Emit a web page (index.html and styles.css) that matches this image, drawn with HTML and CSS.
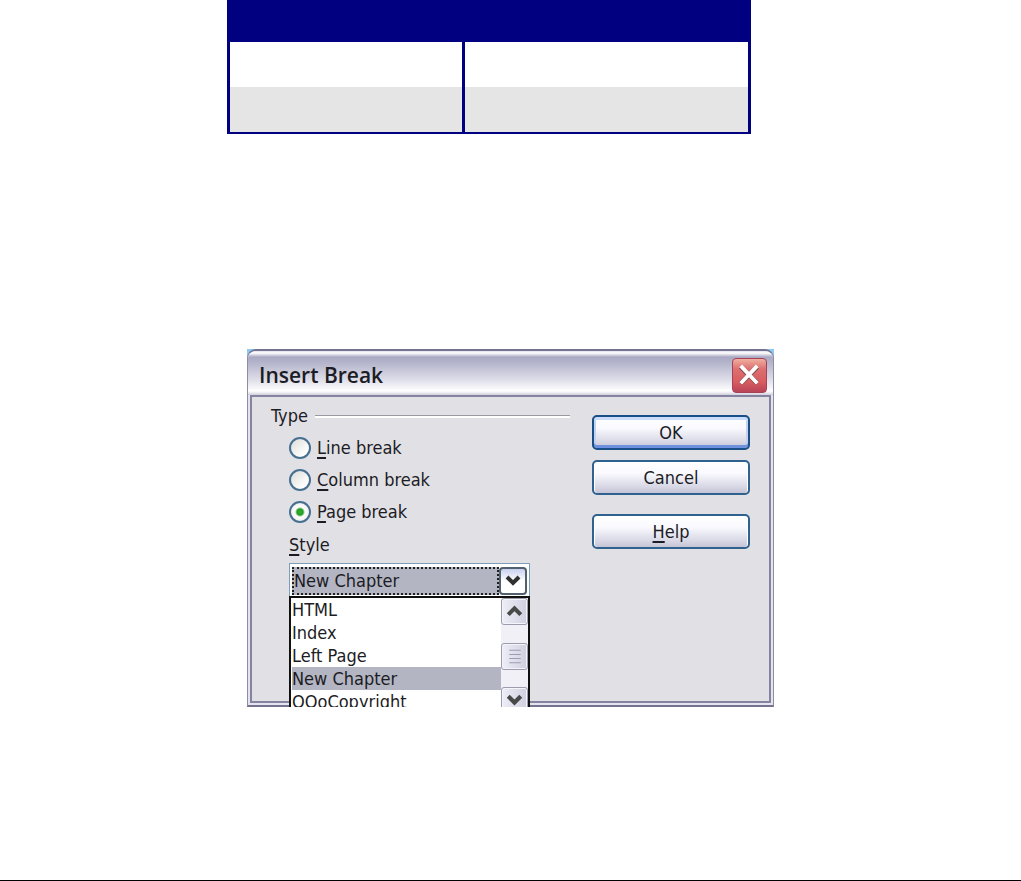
FILE: index.html
```html
<!DOCTYPE html>
<html lang="en">

<head>
    <meta charset="UTF-8">
    <meta name="viewport" content="width=device-width, initial-scale=1.0">
    <title>Insert Break</title>
    <link rel="stylesheet" href="styles.css">
</head>

<body>
<div class="page">
    <table class="grid">
        <thead>
        <tr>
            <th class="first"></th>
            <th></th>
        </tr>
        </thead>
        <tbody>
        <tr>
            <td></td>
            <td></td>
        </tr>
        <tr class="even">
            <td></td>
            <td></td>
        </tr>
        </tbody>
    </table>

    <div class="figure">
        <form class="dialog">
            <div class="titlebar">
                <h1>Insert Break</h1>
                <button type="button" class="close" aria-label="Close">
                    <svg viewBox="0 0 34 34">
                        <path d="M8 8L25 25M25 8L8 25" stroke="#7c4545" stroke-width="5"/>
                        <path d="M8 7L25 25M25 7L8 25" stroke="#fff" stroke-width="4"/>
                    </svg>
                </button>
            </div>
            <div class="content">
                <div class="options">
                    <fieldset>
                        <legend>Type</legend>
                        <label><input type="radio" name="type"><span><u>L</u>ine break</span></label>
                        <label><input type="radio" name="type"><span><u>C</u>olumn break</span></label>
                        <label><input type="radio" name="type" checked><span><u>P</u>age break</span></label>
                    </fieldset>
                    <div class="style">
                        <label class="style-label" for="style"><u>S</u>tyle</label>
                        <div class="combo">
                            <select id="style">
                                <option>HTML</option>
                                <option>Index</option>
                                <option>Left Page</option>
                                <option selected>New Chapter</option>
                                <option>OOoCopyright</option>
                            </select>
                            <span class="arrow">
                                <svg viewBox="0 0 24 24"><path d="M6 8l6 6 6-6" stroke="#303030" stroke-width="4"/></svg>
                            </span>
                            <div class="list">
                                <ul>
                                    <li>HTML</li>
                                    <li>Index</li>
                                    <li>Left Page</li>
                                    <li class="selected">New Chapter</li>
                                    <li>OOoCopyright</li>
                                </ul>
                                <div class="scrollbar">
                                    <button type="button" aria-label="Scroll up">
                                        <svg viewBox="0 0 24 24"><path d="M6 15l6-6 6 6" stroke="#484848" stroke-width="4"/></svg>
                                    </button>
                                    <div class="thumb">
                                        <svg viewBox="0 0 24 24"><path d="M7 6h11M7 10h11M7 14h11M7 18h11" stroke="#9c9cb4"/></svg>
                                    </div>
                                    <button type="button" aria-label="Scroll down">
                                        <svg viewBox="0 0 24 24"><path d="M6 8l6 6 6-6" stroke="#484848" stroke-width="4"/></svg>
                                    </button>
                                </div>
                            </div>
                        </div>
                    </div>
                </div>
                <div class="buttons">
                    <button type="button" class="default">OK</button>
                    <button type="button">Cancel</button>
                    <button type="button" class="help"><span><u>H</u>elp</span></button>
                </div>
            </div>
        </form>
    </div>
</div>
</body>

</html>
```
FILE: styles.css
```css
* {
    box-sizing: border-box;
}

body {
    margin: 0;
    background: #fff;
    color: #1c1c24;
    font: 18px/24px "DejaVu Sans Condensed", "DejaVu Sans", sans-serif;
}

.page {
    min-height: 100vh;
    border-bottom: 1px solid #000;
}

/* table */
.grid {
    width: 524px;
    max-width: 100%;
    margin: 0 auto 215px 227px;
    border: 3px solid #000080;
    border-width: 0 3px 2px;
    border-spacing: 0;
    table-layout: fixed;
}

.grid th,
.grid td {
    height: 45px;
    padding: 0;
}

.grid th {
    height: 42px;
    background: #000080;
}

.grid .first {
    width: 235px;
}

.grid td:first-child {
    border-right: 3px solid #000080;
}

.grid .even td {
    background: #e5e5e5;
}

/* dialog */
.figure {
    overflow: hidden;
    max-width: 527px;
    margin: 0 auto;
    background: #8fc8f0;
}

.dialog {
    padding: 0 2px 2px;
    border: 1px solid #8e8ca4;
    border-top: 2px solid #74728e;
    border-bottom: 2px solid #74728e;
    border-radius: 9px 9px 0 0;
    background: #e4e4ee;
}

.titlebar {
    display: flex;
    align-items: center;
    justify-content: space-between;
    height: 44px;
    margin: 0 -2px;
    padding: 4px 6px 0 11px;
    border-radius: 8px 8px 0 0;
    background: linear-gradient(#e0e0ee 0, #fff 2px, #a9a9c4 6px, #b5b5cc 12px, #dcdce8 28px, #fff 40px, #cfcfdc 44px);
}

.titlebar h1 {
    margin: 0;
    font: 600 21px/30px "Open Sans", sans-serif;
}

.close {
    width: 35px;
    height: 35px;
    padding: 0;
    border: 1px solid #a84058;
    border-radius: 4px;
    background: linear-gradient(#f0b0a0, #dc7070 30%, #d85c60 70%, #b84458);
}

svg {
    display: block;
    width: 100%;
    height: 100%;
    fill: none;
}

.content {
    display: flex;
    justify-content: space-between;
    height: 308px;
    padding: 7px 19px 0;
    border: 2px solid #85839f;
    background: #e1e0e5;
}

u {
    text-underline-offset: 3px;
    text-decoration-thickness: 2px;
    text-decoration-skip-ink: none;
}

fieldset {
    width: 299px;
    margin: 0;
    padding: 0 0 0 18px;
    border: 0;
}

legend {
    display: flex;
    align-items: center;
    gap: 7px;
    width: 299px;
    margin: 0 0 4px -18px;
    padding: 0;
}

legend::after {
    content: "";
    flex: 1;
    height: 2px;
    border-top: 1px solid #9a9aa2;
    background: #fff;
}

fieldset label {
    display: flex;
    align-items: center;
    gap: 6px;
    height: 32px;
}

input[type="radio"] {
    appearance: none;
    width: 22px;
    height: 22px;
    margin: 0;
    border: 2px solid #456f90;
    border-radius: 50%;
    background: linear-gradient(135deg, #dcdcd8, #fff 80%);
}

input[type="radio"]:checked {
    background: radial-gradient(circle, #2fb52f 0, #249c24 3px, #fff 5px, #f0f0ee 9px);
}

.style {
    width: 259px;
    padding: 5px 0 0 18px;
}

.style-label {
    display: block;
    height: 30px;
}

.combo {
    display: grid;
    grid-template-columns: 1fr 30px;
    position: relative;
    width: 241px;
    height: 36px;
    padding: 3px 0 4px;
    border: 1px solid #7f9db9;
    background: #fff;
}

.combo select {
    appearance: none;
    grid-area: 1 / 1;
    margin-left: 2px;
    padding: 0;
    border: 2px dotted #202020;
    border-radius: 0;
    background: #b3b5c2;
    color: inherit;
    font: inherit;
}

.arrow {
    margin-right: 2px;
    border: 2px solid #50606c;
    border-radius: 4px;
    background: linear-gradient(#c8d0f0, #fff 50%);
}

.list {
    display: flex;
    position: absolute;
    top: 32px;
    left: -1px;
    right: -1px;
    height: 118px;
    border: 2px solid #101010;
    border-bottom: 0;
    background: #fff;
}

.list ul {
    flex: 1;
    margin: 0;
    padding: 0 0 0 1px;
    list-style: none;
}

.list li {
    height: 23px;
    line-height: 23px;
}

.list .selected {
    background: #b3b5c2;
}

.scrollbar {
    display: flex;
    flex-direction: column;
    justify-content: space-between;
    width: 27px;
    background: #f0f0f6;
}

.scrollbar button,
.thumb {
    height: 27px;
    padding: 0;
    border: 1px solid #9c9cae;
    border-radius: 3px;
    background: linear-gradient(90deg, #eeeef8, #cfcfe0);
    box-shadow: inset 0 0 0 1px #f4f4fa;
}

.buttons {
    display: flex;
    flex-direction: column;
    gap: 10px;
    width: 158px;
    padding-top: 11px;
}

.buttons button {
    height: 35px;
    padding: 0;
    border: 2px solid #2f628f;
    border-radius: 5px;
    background: linear-gradient(#fff 0, #fafaff 35%, #dcdce9 75%, #c4c4d6);
    box-shadow: inset 1px 0 #fff, inset -1px 0 #fff;
    color: inherit;
    font: inherit;
}

.buttons .default {
    border-color: #174f86;
    box-shadow: inset 0 3px #cbdcfa, inset 0 -3px #7090e0, inset 2px 0 #c4d2f0, inset -2px 0 #c4d2f0;
}

.buttons .help {
    margin-top: 9px;
}
```
